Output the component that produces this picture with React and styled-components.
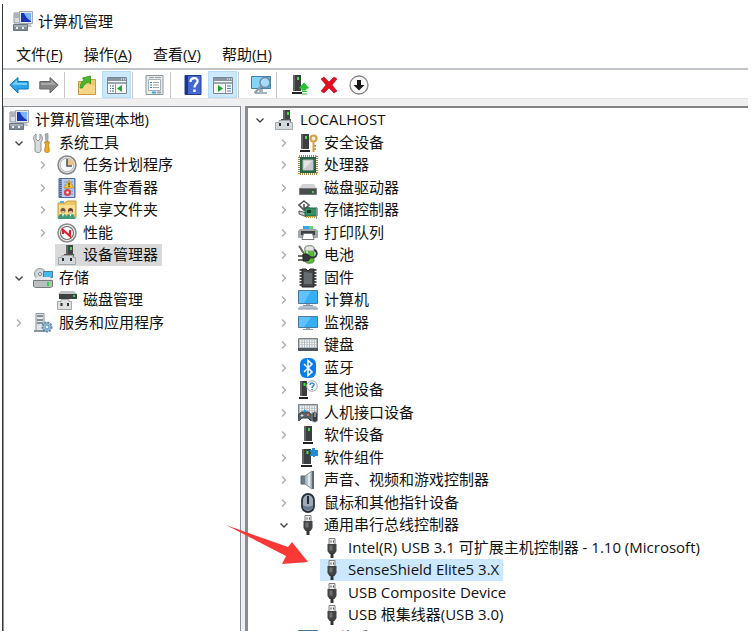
import React from "react";
import styled, { createGlobalStyle, css } from "styled-components";

const GlobalStyle = createGlobalStyle`
  * { box-sizing: border-box; }
  body {
    margin: 0;
    background: #fff;
    color: #111;
    font-family: "Open Sans", "Noto Sans CJK SC", sans-serif;
    font-size: 15px;
  }
  button { font: inherit; color: inherit; }
`;

const Page = styled.div`
  position: relative;
  height: 100vh;
  padding: 4px 6px 7px 2px;
  overflow: hidden;
`;

const Window = styled.main`
  display: flex;
  flex-direction: column;
  height: 100%;
  border-left: 1px solid #33393b;
`;

const TitleBar = styled.header`
  display: flex;
  align-items: center;
  gap: 5px;
  height: 35px;
  padding: 0 0 2px 10px;
`;

const Title = styled.h1`
  margin: 0;
  font-size: 15px;
  font-weight: 400;
  line-height: 22px;
`;

const MenuBar = styled.nav`
  display: flex;
  align-items: center;
  gap: 1px;
  height: 31px;
  padding-left: 3px;
  border-bottom: 2px solid #c2c6cb;
`;

const MenuButton = styled.button`
  padding: 0 10px;
  border: 0;
  background: none;
  line-height: 22px;
  white-space: nowrap;
`;

const Toolbar = styled.div`
  display: flex;
  align-items: flex-end;
  gap: 1px;
  height: 29px;
  padding-left: 1px;
  border-bottom: 1px solid #e2e2e2;
`;

const ToolButton = styled.button`
  display: grid;
  place-items: center;
  width: 29px;
  height: 27px;
  padding: 0;
  border: 1px solid ${(p) => (p.$on ? "#b5dcfb" : "transparent")};
  background: ${(p) => (p.$on ? "#cce8ff" : "none")};
`;

const Divider = styled.span`
  width: 1px;
  height: 26px;
  margin-right: 6px;
  background: #c8c8c8;
`;

const Panes = styled.div`
  display: flex;
  flex: 1;
  gap: 4px;
  min-height: 0;
  padding-top: 7px;
  background: #f0f0f0;
`;

const Pane = styled.section`
  overflow: hidden;
  background: #fff;
  ${(p) =>
    p.$main
      ? css`
          flex: 1;
          min-width: 0;
          padding-top: 1px;
          border-top: 2px solid #828282;
          border-left: 3px solid #8c8c8e;
        `
      : css`
          flex: 0 0 238px;
          padding-top: 2px;
          border: 1px solid #8a919b;
          border-bottom: 0;
        `}
`;

const Tree = styled.ul`
  display: grid;
  grid-auto-rows: 22px 23px;
  margin: 0;
  padding: 0;
  list-style: none;
`;

const Row = styled.li`
  display: flex;
  align-items: stretch;
  gap: 4px;
  padding-left: ${(p) => p.$indent}px;
`;

const Toggle = styled.button`
  display: grid;
  place-items: center;
  width: 16px;
  padding: 0;
  border: 0;
  background: none;
`;

const Item = styled.button`
  display: flex;
  align-items: center;
  gap: 6px;
  padding: 0 4px 0 2px;
  border: 0;
  background: ${(p) => p.$fill || "none"};
  white-space: nowrap;
`;

const Label = styled.span`
  padding-bottom: 2px;
  line-height: 20px;
`;

const Glyph = styled.svg`
  display: block;
  flex: none;
`;

const Pointer = styled.svg`
  position: absolute;
  left: 224px;
  top: 522px;
  pointer-events: none;
`;

const Svg = ({ children }) => (
  <Glyph width="20" height="20" viewBox="0 0 20 20" aria-hidden="true">
    {children}
  </Glyph>
);

const Chevron = ({ open }) => (
  <Glyph width="10" height="10" viewBox="0 0 10 10" aria-hidden="true">
    <path
      d={open ? "M1.5 3.5 5 7l3.5-3.5" : "M3 1.5 6.5 5 3 8.5"}
      fill="none"
      stroke={open ? "#444" : "#adadad"}
      strokeWidth="1.4"
    />
  </Glyph>
);

const Tower = ({ x = 6, y = 1, w = 8, h = 18 }) => (
  <g>
    <path d={`M${x} ${y}h${w}v${h - 3}h-${w}z`} fill="#3c3e40" />
    <path d={`M${x} ${y}h2v${h - 3}h-2z`} fill="#626567" />
    <path d={`M${x - 1} ${y + h - 2}h${w + 2}v2h-${w + 2}z`} fill="#222" />
    <path d={`M${x + w / 2} ${y + 2}h2v3h-2z`} fill="#3fe63f" />
  </g>
);

const Plug = () => (
  <g>
    <path d="M7 .5h6v6H7z" fill="#ececec" stroke="#7d7d7d" />
    <path d="M8.5 2.5h1v2h-1zM11 2.5h1v2h-1z" fill="#555" />
    <path d="M5.500 6h9v7l-2 3h-5l-2-3z" fill="#414345" />
    <path d="M7.500 7.500h3v5h-3z" fill="#6e7072" />
    <path d="M8.500 15h3v5h-3z" fill="#333" />
  </g>
);

const Monitor = ({ y = 2, h = 12 }) => (
  <g>
    <path d={`M.5 ${y}.500h19v${h}H.5z`} fill="#35aef5" stroke="#4b7898" />
    <path d={`M1 ${y + 1}h12L6 ${y + h}H1z`} fill="#72caff" opacity=".7" />
    <path d={`M8 ${y + h + 1}h4v2H8z`} fill="#9dacb8" />
    <path d={`M5 ${y + h + 2}.500h10`} stroke="#8797a5" />
  </g>
);

const Keys = ({ y = 3 }) => (
  <g>
    <path d={`M.5 ${y}.500h19v11H.5z`} fill="#b6bdc2" stroke="#7c858b" />
    <path
      d={`M2 ${y + 3}h16M2 ${y + 5}.500h16M2 ${y + 8}h16`}
      stroke="#fff"
      strokeWidth="1.500"
      strokeDasharray="1.500 1"
    />
    <path d={`M0 ${y + 10}h20v3H0z`} fill="#4d575f" />
  </g>
);

const icons = {
  console: (
    <>
      <path d="M1 2h6v10H1z" fill="#d7dde2" stroke="#8b969f" />
      <path d="M2 4h4M2 6h4" stroke="#7c8891" />
      <path d="M6.500.5h13v12h-13z" fill="#e4e7ea" stroke="#a3abb2" />
      <path d="M8 2h10v9H8z" fill="#1635b8" />
      <path d="m11 2 7 0v8c-2-1-5-3-7-8z" fill="#7ab2ff" />
      <path d="M10 13h8l1 3H9z" fill="#c3cacf" />
      <path d="M.5 13.500h14v6H.5z" fill="#7f8c94" stroke="#6b777f" />
      <path d="M1 15h13" stroke="#c8d0d5" />
      <path d="M3 16h2v2H3zM9 16h2v2H9z" fill="#e8eef1" />
    </>
  ),
  back: (
    <>
      <path d="M.8 10 9 2.500v4h10.200v7.500H9v4z" fill="#29a5e8" stroke="#1976b4" />
      <path d="M3 9.700 8 5v3h10v2z" fill="#79d0fa" />
    </>
  ),
  forward: (
    <>
      <path d="M19.200 10 11 2.500v4H.8v7.500H11v4z" fill="#858585" stroke="#686868" />
      <path d="M17 9.700 12 5v3H2v2z" fill="#aaa" />
    </>
  ),
  folderUp: (
    <>
      <path d="M1.500 6.500h7l2-2h8v15h-17z" fill="#efca69" stroke="#c89a3e" />
      <path d="M2 10h16v9H2z" fill="#f5d685" />
      <path d="M3 13C3 9 5 6 7 5L5.500 3l8-2 0 8-2-2c-3 1-5 3-6 6z" fill="#46b82d" stroke="#268a1c" strokeWidth=".7" />
    </>
  ),
  treePane: (
    <>
      <path d="M.5 2.500h19v16H.5z" fill="#f5f6f7" stroke="#7b8793" />
      <path d="M1 3h18v3H1z" fill="#8997a4" />
      <path d="M14 4h1M16 4h1M18 4h1" stroke="#fff" />
      <path d="M1 8h18" stroke="#9ba7b1" strokeWidth="2" />
      <path d="M8.500 9v9" stroke="#8c98a3" />
      <path d="M3 11h4M3 13.500h4M3 16h4" stroke="#54718a" strokeDasharray="1 1 2 0" />
      <path d="m15 10v7l-5-3.500z" fill="#20a62b" />
    </>
  ),
  actionPane: (
    <>
      <path d="M.5 2.500h19v16H.5z" fill="#f5f6f7" stroke="#7b8793" />
      <path d="M1 3h18v3H1z" fill="#8997a4" />
      <path d="M14 4h1M16 4h1M18 4h1" stroke="#fff" />
      <path d="M1 8h18" stroke="#9ba7b1" strokeWidth="2" />
      <path d="M12.500 9v9" stroke="#8c98a3" />
      <path d="M14 11h4M14 13.500h4M14 16h4" stroke="#4b82c6" />
      <path d="m5 10v7l5-3.500z" fill="#20a62b" />
    </>
  ),
  properties: (
    <>
      <path d="M1 .5h17v19H1z" fill="#e8ebec" stroke="#90979c" />
      <path d="M3.500 4.500h12v11h-12z" fill="#fff" stroke="#a5afb7" />
      <path d="M4 2.500h5M10 2.500h6" stroke="#9aa2a8" />
      <path d="M5 7.500h2M5 10h2M5 12.500h2" stroke="#2c7db9" />
      <path d="M8 7.500h6M8 10h6M8 12.500h6" stroke="#9aa4ab" />
      <path d="M7 17.500h4" stroke="#3da6df" strokeWidth="2" />
      <path d="M12 17.500h4" stroke="#9aa4ab" strokeWidth="2" />
    </>
  ),
  help: (
    <>
      <path d="M2 .5h16v19H2z" fill="#4468cf" stroke="#203c8b" />
      <path d="M2 1h3v18H2z" fill="#1a358b" />
      <path d="M7.500 7c0-5 8-5 7-.5-.5 2.500-3 2.500-3 6" fill="none" stroke="#fff" strokeWidth="2.200" />
      <path d="M10.200 14.500h2.500V17h-2.500z" fill="#fff" />
    </>
  ),
  scan: (
    <>
      <path d="M.5 1.500h19v12H.5z" fill="#49b8ed" stroke="#417fa7" />
      <path d="M1 2h13L8 13H1z" fill="#84d4fa" />
      <path d="M8 14h4v3h4v2H4v-2h4z" fill="#a6b3bc" />
      <circle cx="14" cy="7.500" r="5" fill="#b8e5fb" fillOpacity=".8" stroke="#72899a" strokeWidth="1.500" />
      <path d="m10.500 11-7 7" stroke="#8798a4" strokeWidth="2" />
    </>
  ),
  update: (
    <>
      <Tower x={4} y={0} w={8} h={19} />
      <path d="m15 8 4.500 5H17v2h-4v-2h-2.500zM13 16.500h5M13 19h5" fill="#28bf32" stroke="#28bf32" />
    </>
  ),
  remove: <path d="m2 4 3-2 5 5 5-5 3 2-5 6 5 6-3 2-5-5-5 5-3-2 5-6z" fill="#e30d20" stroke="#bd0717" strokeWidth=".6" />,
  disable: (
    <>
      <circle cx="10" cy="10" r="9" fill="#f8f8f8" stroke="#858585" strokeWidth="1.300" />
      <path d="M8 5h4v5h3.500L10 15.500 4.500 10H8z" fill="#171717" />
    </>
  ),
  tools: (
    <>
      <path d="M3 1v5l2 2 2-2V1c3 2 3 6 1 8v9c-1 2-5 2-6 0V9C0 6 0 3 3 1z" fill="#d7dbdd" stroke="#7d868b" strokeWidth=".9" />
      <path d="m12 1 3-.5v9h-2z" fill="#aeb6ba" stroke="#7e878b" strokeWidth=".6" />
      <path d="M11.500 9h5l-1 3 1 6c-1 2-4 2-5 0l1-6z" fill="#f1a91f" stroke="#b87611" strokeWidth=".7" />
    </>
  ),
  clock: (
    <>
      <circle cx="10" cy="10" r="9" fill="#e3e4e4" stroke="#858585" strokeWidth="1.500" />
      <circle cx="10" cy="10" r="6.800" fill="#f5f8fa" stroke="#b4b6b7" />
      <path d="M10 3.500A6.500 6.500 0 0 1 16.500 10H10z" fill="#f0c47e" />
      <path d="M10 4v7h5" fill="none" stroke="#46515e" strokeWidth="1.500" />
    </>
  ),
  events: (
    <>
      <path d="M2 .5h16v19H2z" fill="#7f9bd2" stroke="#4e69a3" />
      <path d="M5 1h12v18H5z" fill="#b9cbea" />
      <path d="M7 4h9M7 7h9M7 10h9M7 13h9M7 16h9" stroke="#7d99cb" />
      <path d="M3.500 2v17" stroke="#425685" strokeWidth="2" strokeDasharray="1 1" />
      <path d="m12 2 5 8H7z" fill="#f7c736" stroke="#b7860d" strokeWidth=".6" />
      <path d="M12 4.500v3M12 8v1" stroke="#443507" strokeWidth="1.200" />
      <circle cx="10.500" cy="14.500" r="3.500" fill="#dc3d46" />
      <circle cx="10.500" cy="14.500" r="1.200" fill="#fff" />
    </>
  ),
  shared: (
    <>
      <path d="M1 3h7l2-2h9v17H1z" fill="#edc965" stroke="#c99c3f" />
      <path d="M2 5h16v9H2z" fill="#f9df94" />
      <path d="M3 2h4" stroke="#52ade8" strokeWidth="2" />
      <path d="M1 19c0-7 9-7 9 0zM9 19c0-7 9-7 9 0z" fill="#3b9b7c" />
      <circle cx="6" cy="10.500" r="2.500" fill="#74533d" />
      <circle cx="13.500" cy="10.500" r="2.500" fill="#65412c" />
      <path d="M4.500 11h3v2h-3zM12 11h3v2h-3z" fill="#e9b98c" />
      <path d="M5 14h2l-1 3zM12.500 14h2l-1 3z" fill="#fff" />
    </>
  ),
  performance: (
    <>
      <circle cx="10" cy="10" r="9" fill="#eee" stroke="#8a8a8a" strokeWidth="1.500" />
      <circle cx="10" cy="10" r="6.500" fill="#fff" stroke="#6d6d6d" strokeWidth="1.200" />
      <path d="M6 11V7l7 6V7" fill="none" stroke="#dc2430" strokeWidth="2.200" />
    </>
  ),
  device: (
    <>
      <path d="M9 0h7v12H9z" fill="#414548" />
      <path d="M9 0h2v12H9z" fill="#656a6e" />
      <path d="M13 2h2v3h-2z" fill="#42dc42" />
      <path d="M7 9h10v3H7z" fill="#555" />
      <path d="M5 10.500h11v2h2.500v7h-17v-7H5z" fill="#d5d8da" stroke="#a2a8ac" />
      <path d="M5 13h2v3H5zM13 13h2v3h-2z" fill="#292c2e" />
    </>
  ),
  storage: (
    <>
      <circle cx="7" cy="6" r="5.500" fill="#d3d8da" stroke="#8c9498" />
      <circle cx="7" cy="6" r="1.500" fill="#fff" stroke="#798185" />
      <path d="M10.500 3.500h9v6h-9z" fill="#43b9ee" stroke="#477e9e" />
      <path d="m2 11 2-2h13l3 3H1z" fill="#e5e7e8" />
      <path d="M.5 12.500h19v6l-2 1h-15l-2-1z" fill="#b9bec1" stroke="#757c80" />
      <path d="M14 14h2v4h-2z" fill="#35d238" />
    </>
  ),
  diskManage: (
    <>
      <path d="m4 1h13l3 3H1z" fill="#c1c4c6" />
      <path d="M2 4h18v5H2z" fill="#3e4142" />
      <path d="M16 5h2v2h-2z" fill="#32dc3f" />
      <path d="M4 9.500h8v2h2.500v8H.5v-8H4z" fill="#dddfe0" stroke="#a4a8aa" />
      <path d="M3.500 13h2v3h-2zM10 13h2v3h-2z" fill="#303335" />
    </>
  ),
  services: (
    <>
      <path d="M3 .5h8v18H3z" fill="#e1e5e8" stroke="#89949c" />
      <path d="M4 3h6M4 7h6M4 10h6" stroke="#69757d" strokeWidth="1.300" />
      <path d="M1 17h12v2H1z" fill="#8b969d" />
      <circle cx="14" cy="14" r="4.500" fill="#9bc5e5" stroke="#6087a5" strokeWidth="2" strokeDasharray="2 1" />
      <circle cx="14" cy="14" r="2" fill="#e2f1fa" stroke="#6590b0" />
    </>
  ),
  security: (
    <>
      <Tower x={3} y={1} w={8} h={18} />
      <circle cx="15.500" cy="5.500" r="3" fill="#fff2cc" stroke="#d3a04a" strokeWidth="2.200" />
      <path d="M15.500 9v10M16 13h2M16 16h2" stroke="#d3a04a" strokeWidth="2" />
    </>
  ),
  cpu: (
    <>
      <path d="M1 1h18v18H1z" fill="none" stroke="#a88a45" strokeWidth="2" strokeDasharray="1 1" />
      <path d="M2 2h16v16H2z" fill="#286448" />
      <path d="M5 5h10v10H5z" fill="#e3e5e5" stroke="#aeb7b2" />
      <path d="M5 15 15 5v10z" fill="#c5cbca" />
    </>
  ),
  drive: (
    <>
      <path d="m4 6h12l3 5H1z" fill="#d1d3d5" />
      <path d="M1.500 10.500h17v6h-17z" fill="#4a4d4f" stroke="#777b7d" />
      <path d="M14 13h2v2h-2z" fill="#35df3d" />
    </>
  ),
  controller: (
    <>
      <path d="m6 1 5 4-5 5-5-5zM6 4v4h6" fill="none" stroke="#555" strokeWidth="1.600" />
      <path d="m1 11 8 2v4L1 14z" fill="#c8ccce" stroke="#52575a" />
      <path d="M7 8h12v8H7z" fill="#2d9461" stroke="#1a6744" />
      <path d="M9 10h4v3H9z" fill="#26352e" />
      <path d="M8 17h10" stroke="#bfa140" strokeWidth="2" strokeDasharray="1 1" />
      <path d="M18.500 7v12" stroke="#899196" />
    </>
  ),
  printer: (
    <>
      <path d="M5 3h10v4H5z" fill="#31a8e8" />
      <path d="M11 3h4v4h-4z" fill="#6bd36b" />
      <path d="M2 6h16l2 2v7H0V8z" fill="#a2a7ab" />
      <path d="M3 8h14v4H3z" fill="#3b4146" />
      <path d="M5.500 10.500h9l1.500 6H4z" fill="#fff" stroke="#777" />
      <path d="M17 8h2v1h-2z" fill="#44df4b" />
    </>
  ),
  battery: (
    <>
      <path d="M7 3c0-3 9-3 9 0v13c0 3-9 3-9 0z" fill="#54bf35" stroke="#568448" />
      <path d="M7 3c0-3 9-3 9 0v3H7z" fill="#e3e7e5" stroke="#8f9792" />
      <path d="M9 6v11" stroke="#a5ed83" strokeWidth="2" />
      <path d="M1 1c3 3 3 6 5 7M0 11h6M0 15h6" fill="none" stroke="#6f695e" strokeWidth="2" />
      <path d="M5 9h4l4 3-3 4H5z" fill="#343739" stroke="#222" />
      <path d="M12 12c8 3 8-7 4-7" fill="none" stroke="#36393b" strokeWidth="2" />
    </>
  ),
  firmware: (
    <>
      <path d="M3 1v18M17 1v18" stroke="#555" strokeWidth="3" strokeDasharray="2 1" />
      <path d="M4 1h4l2 2 2-2h4v18H4z" fill="#45494c" stroke="#222" />
      <path d="m6 4 8 1v11H6z" fill="#686d70" />
    </>
  ),
  computer: (
    <>
      <Monitor y={0} h={13} />
      <path d="m2 16h16l2 3H0z" fill="#b4c1cb" />
      <path d="M0 19h20" stroke="#8293a0" />
    </>
  ),
  monitor: <Monitor y={3} h={11} />,
  keyboard: <Keys />,
  bluetooth: (
    <>
      <rect x="2" y="0" width="16" height="20" rx="6" fill="#087eee" />
      <path d="m6 6 8 8-4 3.500v-15L14 6l-8 8" fill="none" stroke="#fff" strokeWidth="1.500" />
    </>
  ),
  other: (
    <>
      <Tower x={2} y={1} w={7} h={18} />
      <circle cx="14" cy="6" r="5.300" fill="#f6f9fb" stroke="#a2abb1" />
      <path d="M12 5c0-3 5-2 4 0-.4 1-2 1-2 3M14 9v1" fill="none" stroke="#3488c8" strokeWidth="1.500" />
    </>
  ),
  hid: (
    <>
      <Keys y={1} />
      <path d="M1 18c-2-3 0-10 4-9h4c4-1 6 6 4 9l-3-3H4z" fill="#596269" stroke="#363d42" />
      <path d="M4 11v3M2.500 12.500h3" stroke="#ddd" />
      <circle cx="10" cy="12" r="1" fill="#ef8930" />
      <path d="M8 9 6 7" stroke="#249ee9" strokeWidth="2" />
      <rect x="14" y="9" width="5.500" height="10" rx="2.500" fill="#373d42" stroke="#858d93" />
      <path d="M17 10v4" stroke="#ddd" />
    </>
  ),
  software: <Tower />,
  component: (
    <>
      <Tower x={4} y={1} w={9} h={18} />
      <path d="M12 2h2V0h3v2h3v6h-3v1h-2V8h-3V6h1V4h-1z" fill="#258bd1" />
    </>
  ),
  sound: (
    <>
      <path d="M3 6h4v8H3z" fill="#6d7b86" stroke="#52616d" />
      <path d="m7 6 7-5v18l-7-5z" fill="#bac3c9" stroke="#83909a" />
      <path d="m10 4 2-1v14l-2-2z" fill="#e3e8ea" />
      <path d="M15 1v18" stroke="#5c6a75" strokeWidth="2" />
    </>
  ),
  mouse: (
    <>
      <rect x="4" y="1" width="12" height="18" rx="6" fill="#9cabb7" stroke="#293138" strokeWidth="1.800" />
      <path d="M5 12c2 2 8 2 10 0v2c0 4-10 4-10 0z" fill="#65798a" />
      <path d="M10 3v8" stroke="#242b30" strokeWidth="2" />
    </>
  ),
  usb: <Plug />,
  network: <Monitor y={2} h={10} />,
};

const Icon = ({ name }) => <Svg>{icons[name]}</Svg>;

const menus = [
  ["文件", "F"],
  ["操作", "A"],
  ["查看", "V"],
  ["帮助", "H"],
];

const tools = [
  ["back", "后退"],
  ["forward", "前进"],
  null,
  ["folderUp", "向上一级"],
  ["treePane", "显示控制台树", true],
  null,
  ["properties", "属性"],
  null,
  ["help", "帮助"],
  ["actionPane", "显示操作窗格", true],
  null,
  ["scan", "扫描检测硬件改动"],
  null,
  ["update", "更新驱动程序"],
  ["remove", "卸载设备"],
  ["disable", "禁用设备"],
];

// Each node: [level, icon, label, state, highlight colour]
const consoleTree = [
  [0, "console", "计算机管理(本地)"],
  [1, "tools", "系统工具", "open"],
  [2, "clock", "任务计划程序", "closed"],
  [2, "events", "事件查看器", "closed"],
  [2, "shared", "共享文件夹", "closed"],
  [2, "performance", "性能", "closed"],
  [2, "device", "设备管理器", null, "#d9d9d9"],
  [1, "storage", "存储", "open"],
  [2, "diskManage", "磁盘管理"],
  [1, "services", "服务和应用程序", "closed"],
];

const deviceTree = [
  [0, "device", "LOCALHOST", "open"],
  [1, "security", "安全设备", "closed"],
  [1, "cpu", "处理器", "closed"],
  [1, "drive", "磁盘驱动器", "closed"],
  [1, "controller", "存储控制器", "closed"],
  [1, "printer", "打印队列", "closed"],
  [1, "battery", "电池", "closed"],
  [1, "firmware", "固件", "closed"],
  [1, "computer", "计算机", "closed"],
  [1, "monitor", "监视器", "closed"],
  [1, "keyboard", "键盘", "closed"],
  [1, "bluetooth", "蓝牙", "closed"],
  [1, "other", "其他设备", "closed"],
  [1, "hid", "人机接口设备", "closed"],
  [1, "software", "软件设备", "closed"],
  [1, "component", "软件组件", "closed"],
  [1, "sound", "声音、视频和游戏控制器", "closed"],
  [1, "mouse", "鼠标和其他指针设备", "closed"],
  [1, "usb", "通用串行总线控制器", "open"],
  [2, "usb", "Intel(R) USB 3.1 可扩展主机控制器 - 1.10 (Microsoft)"],
  [2, "usb", "SenseShield Elite5 3.X", null, "#cce8ff"],
  [2, "usb", "USB Composite Device"],
  [2, "usb", "USB 根集线器(USB 3.0)"],
  [1, "network", "网络适配器", "closed"],
];

const TreeView = ({ nodes, inset, label }) => (
  <Tree aria-label={label}>
    {nodes.map(([level, icon, text, state, fill]) => (
      <Row key={text} $indent={inset + level * 24 - (state ? 20 : 0)}>
        {state && (
          <Toggle aria-label={`${state === "open" ? "折叠" : "展开"} ${text}`} aria-expanded={state === "open"}>
            <Chevron open={state === "open"} />
          </Toggle>
        )}
        <Item $fill={fill}>
          <Icon name={icon} />
          <Label>{text}</Label>
        </Item>
      </Row>
    ))}
  </Tree>
);

export default function App() {
  return (
    <Page>
      <GlobalStyle />
      <Window>
        <TitleBar>
          <Icon name="console" />
          <Title>计算机管理</Title>
        </TitleBar>
        <MenuBar>
          {menus.map(([name, key]) => (
            <MenuButton key={key}>
              {name}(<u>{key}</u>)
            </MenuButton>
          ))}
        </MenuBar>
        <Toolbar role="toolbar">
          {tools.map((tool, i) =>
            tool ? (
              <ToolButton key={tool[0]} aria-label={tool[1]} $on={tool[2]}>
                <Icon name={tool[0]} />
              </ToolButton>
            ) : (
              <Divider key={i} />
            )
          )}
        </Toolbar>
        <Panes>
          <Pane>
            <TreeView nodes={consoleTree} inset={3} label="控制台树" />
          </Pane>
          <Pane $main>
            <TreeView nodes={deviceTree} inset={24} label="设备" />
          </Pane>
        </Panes>
      </Window>
      <Pointer width="86" height="44" viewBox="0 0 86 44" aria-hidden="true">
        <path d="m2 3 62 22 4-5 16 20-26 2 4-8z" fill="#fb3836" />
      </Pointer>
    </Page>
  );
}
